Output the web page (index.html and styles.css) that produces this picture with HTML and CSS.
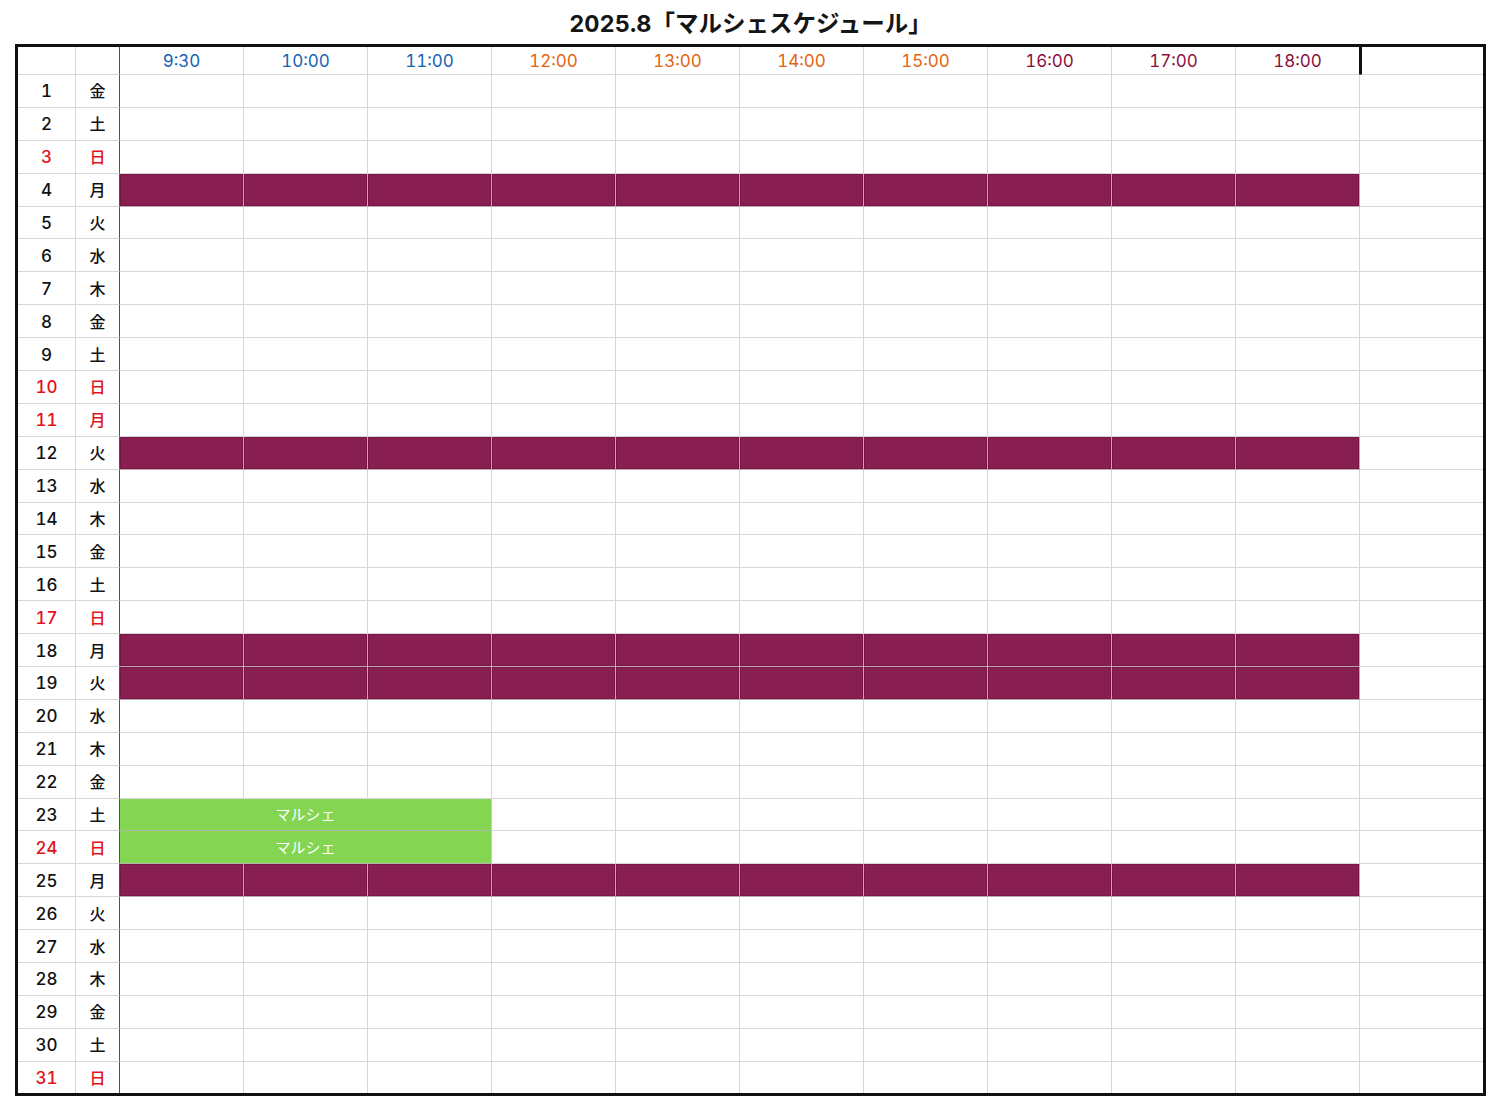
FILE: index.html
```html
<!DOCTYPE html>
<html lang="ja">
<head>
<meta charset="utf-8">
<title>2025.8「マルシェスケジュール」</title>
<link rel="stylesheet" href="styles.css">
</head>
<body>
<div class="page">
  <h1 class="title">2025.8「マルシェスケジュール」</h1>
  <table class="sched">
    <thead>
      <tr>
        <th class="c-d"></th><th class="c-w"></th>
        <th class="tm blue">9:30</th><th class="tm blue">10:00</th><th class="tm blue">11:00</th>
        <th class="tm orange">12:00</th><th class="tm orange">13:00</th><th class="tm orange">14:00</th><th class="tm orange">15:00</th>
        <th class="tm maroon">16:00</th><th class="tm maroon">17:00</th><th class="tm maroon end">18:00</th>
        <th class="extra"></th>
      </tr>
    </thead>
    <tbody>
      <tr><th class="d">1</th><th class="w">金</th><td></td><td></td><td></td><td></td><td></td><td></td><td></td><td></td><td></td><td></td><td></td></tr>
      <tr><th class="d">2</th><th class="w">土</th><td></td><td></td><td></td><td></td><td></td><td></td><td></td><td></td><td></td><td></td><td></td></tr>
      <tr class="hol"><th class="d">3</th><th class="w">日</th><td></td><td></td><td></td><td></td><td></td><td></td><td></td><td></td><td></td><td></td><td></td></tr>
      <tr class="closed"><th class="d">4</th><th class="w">月</th><td></td><td></td><td></td><td></td><td></td><td></td><td></td><td></td><td></td><td></td><td></td></tr>
      <tr><th class="d">5</th><th class="w">火</th><td></td><td></td><td></td><td></td><td></td><td></td><td></td><td></td><td></td><td></td><td></td></tr>
      <tr><th class="d">6</th><th class="w">水</th><td></td><td></td><td></td><td></td><td></td><td></td><td></td><td></td><td></td><td></td><td></td></tr>
      <tr><th class="d">7</th><th class="w">木</th><td></td><td></td><td></td><td></td><td></td><td></td><td></td><td></td><td></td><td></td><td></td></tr>
      <tr><th class="d">8</th><th class="w">金</th><td></td><td></td><td></td><td></td><td></td><td></td><td></td><td></td><td></td><td></td><td></td></tr>
      <tr><th class="d">9</th><th class="w">土</th><td></td><td></td><td></td><td></td><td></td><td></td><td></td><td></td><td></td><td></td><td></td></tr>
      <tr class="hol"><th class="d">10</th><th class="w">日</th><td></td><td></td><td></td><td></td><td></td><td></td><td></td><td></td><td></td><td></td><td></td></tr>
      <tr class="hol"><th class="d">11</th><th class="w">月</th><td></td><td></td><td></td><td></td><td></td><td></td><td></td><td></td><td></td><td></td><td></td></tr>
      <tr class="closed"><th class="d">12</th><th class="w">火</th><td></td><td></td><td></td><td></td><td></td><td></td><td></td><td></td><td></td><td></td><td></td></tr>
      <tr><th class="d">13</th><th class="w">水</th><td></td><td></td><td></td><td></td><td></td><td></td><td></td><td></td><td></td><td></td><td></td></tr>
      <tr><th class="d">14</th><th class="w">木</th><td></td><td></td><td></td><td></td><td></td><td></td><td></td><td></td><td></td><td></td><td></td></tr>
      <tr><th class="d">15</th><th class="w">金</th><td></td><td></td><td></td><td></td><td></td><td></td><td></td><td></td><td></td><td></td><td></td></tr>
      <tr><th class="d">16</th><th class="w">土</th><td></td><td></td><td></td><td></td><td></td><td></td><td></td><td></td><td></td><td></td><td></td></tr>
      <tr class="hol"><th class="d">17</th><th class="w">日</th><td></td><td></td><td></td><td></td><td></td><td></td><td></td><td></td><td></td><td></td><td></td></tr>
      <tr class="closed"><th class="d">18</th><th class="w">月</th><td></td><td></td><td></td><td></td><td></td><td></td><td></td><td></td><td></td><td></td><td></td></tr>
      <tr class="closed"><th class="d">19</th><th class="w">火</th><td></td><td></td><td></td><td></td><td></td><td></td><td></td><td></td><td></td><td></td><td></td></tr>
      <tr><th class="d">20</th><th class="w">水</th><td></td><td></td><td></td><td></td><td></td><td></td><td></td><td></td><td></td><td></td><td></td></tr>
      <tr><th class="d">21</th><th class="w">木</th><td></td><td></td><td></td><td></td><td></td><td></td><td></td><td></td><td></td><td></td><td></td></tr>
      <tr><th class="d">22</th><th class="w">金</th><td></td><td></td><td></td><td></td><td></td><td></td><td></td><td></td><td></td><td></td><td></td></tr>
      <tr><th class="d">23</th><th class="w">土</th><td class="marche" colspan="3">マルシェ</td><td></td><td></td><td></td><td></td><td></td><td></td><td></td><td></td></tr>
      <tr class="hol"><th class="d">24</th><th class="w">日</th><td class="marche" colspan="3">マルシェ</td><td></td><td></td><td></td><td></td><td></td><td></td><td></td><td></td></tr>
      <tr class="closed"><th class="d">25</th><th class="w">月</th><td></td><td></td><td></td><td></td><td></td><td></td><td></td><td></td><td></td><td></td><td></td></tr>
      <tr><th class="d">26</th><th class="w">火</th><td></td><td></td><td></td><td></td><td></td><td></td><td></td><td></td><td></td><td></td><td></td></tr>
      <tr><th class="d">27</th><th class="w">水</th><td></td><td></td><td></td><td></td><td></td><td></td><td></td><td></td><td></td><td></td><td></td></tr>
      <tr><th class="d">28</th><th class="w">木</th><td></td><td></td><td></td><td></td><td></td><td></td><td></td><td></td><td></td><td></td><td></td></tr>
      <tr><th class="d">29</th><th class="w">金</th><td></td><td></td><td></td><td></td><td></td><td></td><td></td><td></td><td></td><td></td><td></td></tr>
      <tr><th class="d">30</th><th class="w">土</th><td></td><td></td><td></td><td></td><td></td><td></td><td></td><td></td><td></td><td></td><td></td></tr>
      <tr class="hol"><th class="d">31</th><th class="w">日</th><td></td><td></td><td></td><td></td><td></td><td></td><td></td><td></td><td></td><td></td><td></td></tr>
    </tbody>
  </table>
</div>
</body>
</html>
```

FILE: styles.css
```css
* { box-sizing: border-box; }

html, body {
  margin: 0;
  padding: 0;
  background: #ffffff;
}

body {
  font-family: Inter, "Noto Sans CJK JP", "Noto Sans", sans-serif;
  font-variant-numeric: tabular-nums;
  color: #111111;
}

.page {
  width: 1500px;
  padding-left: 15px;
}

.title {
  margin: 0;
  width: 1471px;
  height: 44px;
  padding-bottom: 1px;
  display: flex;
  align-items: center;
  justify-content: center;
  font-size: 23.5px;
  font-weight: 700;
  color: #151515;
}

.sched {
  width: 1471px;
  table-layout: fixed;
  border-collapse: separate;
  border-spacing: 0;
  border: 3px solid #111111;
}

.sched th,
.sched td {
  padding: 0;
  border-right: 1px solid #d7d7d7;
  border-bottom: 1px solid #d7d7d7;
  text-align: center;
  vertical-align: middle;
  font-size: 17px;
  line-height: 20px;
}

.sched tr > :last-child { border-right: none; }
.sched tbody tr:last-child > * { border-bottom: none; }

.sched thead tr { height: 28px; }
.sched tbody tr { height: 32.9px; }
.sched tbody tr:last-child { height: 31px; }

.c-d { width: 58px; }
.c-w { width: 44px; }
.tm { width: 124px; }

.sched th.c-w,
.sched th.w { border-right-color: #505050; }

.sched th.tm {
  font-weight: 400;
  font-size: 17px;
  padding-top: 1px;
}
.blue { color: #1463b4; }
.orange { color: #e3630f; }
.maroon { color: #8a0f3d; }

.sched th.end { border-right-color: #111111; }
.sched th.extra { border-left: 2px solid #111111; }

.sched th.d {
  font-weight: 500;
  font-size: 17px;
  padding-top: 1px;
  color: #111111;
}
.sched th.w {
  font-weight: 500;
  font-size: 16px;
  padding-top: 1px;
  color: #111111;
}

.sched .hol .d,
.sched .hol .w { color: #e3121b; }

.sched tr.closed td:nth-child(n+3):nth-child(-n+12) {
  background: #891f50;
  border-right-color: #b8aab0;
  border-bottom-color: #b8aab0;
  box-shadow: inset 0 0 0 1px #7a1646;
}

.sched td.marche {
  background: #84d552;
  color: #ffffff;
  font-size: 15px;
  font-weight: 400;
  padding-top: 1px;
  border-right-color: #c8c8c8;
  border-bottom-color: #aeb8a8;
}
```
